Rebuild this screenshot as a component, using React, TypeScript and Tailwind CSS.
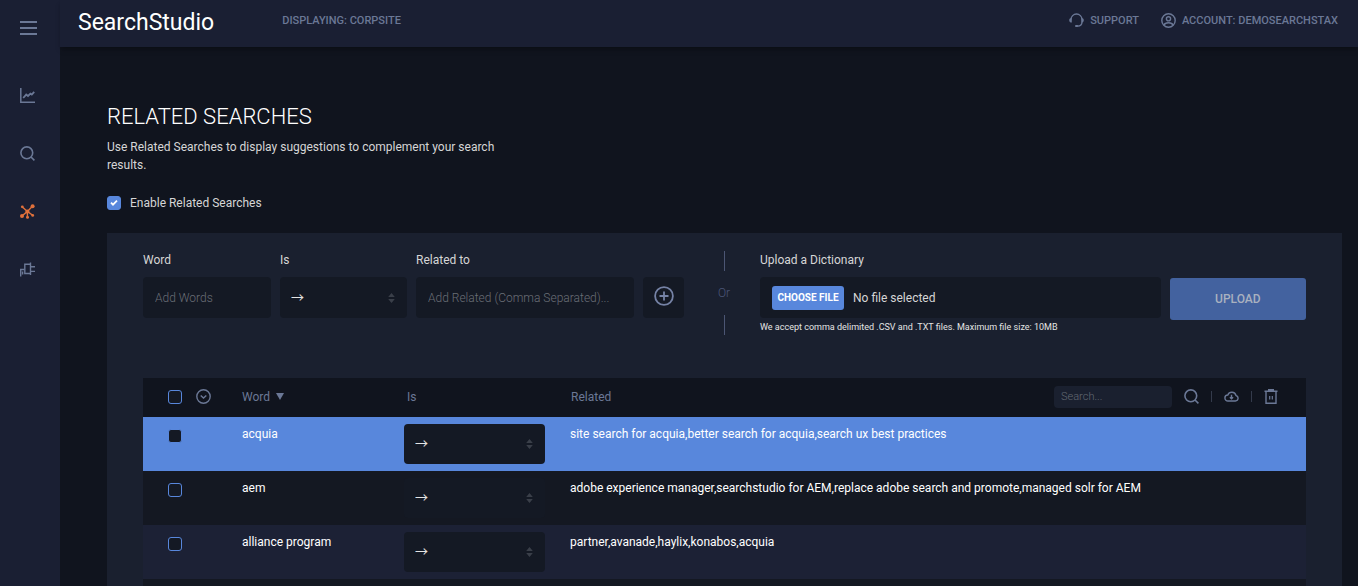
import { useState } from 'react'
import type { ReactNode } from 'react'

const rows = [
  { id: 1, word: 'acquia', related: 'site search for acquia,better search for acquia,search ux best practices', selected: true },
  { id: 2, word: 'aem', related: 'adobe experience manager,searchstudio for AEM,replace adobe search and promote,managed solr for AEM' },
  { id: 3, word: 'alliance program', related: 'partner,avanade,haylix,konabos,acquia' },
]

const iconProps = { fill: 'none', stroke: 'currentColor', 'aria-hidden': true }

function SearchIcon() {
  return (
    <svg width="15" height="15" viewBox="0 0 15 15" strokeWidth="1.6" {...iconProps}>
      <circle cx="6.8" cy="6.8" r="5.9" />
      <path d="M11 11l3.4 3.4" />
    </svg>
  )
}

function ChartIcon() {
  return (
    <svg width="15" height="15" viewBox="0 0 15 15" strokeWidth="1.5" {...iconProps}>
      <path d="M.8 0v14.2H15" />
      <path d="M3.2 10l3-3.4 1.8 1.4 2.4-2.4 1.4 1L14.2 3.8" strokeWidth="1.8" />
    </svg>
  )
}

function HubIcon() {
  return (
    <svg width="15" height="15" viewBox="0 0 15 15" strokeWidth="1.4" {...iconProps}>
      <path d="M7.4 7.4L2.4 2.9M7.4 7.4l4.8-4.8M7.4 7.4L2 12M7.4 7.4l5.2 3.8M7.4 7.4v5.4" />
      <g fill="currentColor" stroke="none">
        <circle cx="7.4" cy="7.4" r="2" />
        <circle cx="2.3" cy="2.8" r="1.4" />
        <circle cx="12.6" cy="2.3" r="2" />
        <circle cx="2" cy="12.1" r="2" />
        <circle cx="12.7" cy="11.4" r="1.4" />
        <circle cx="7.5" cy="13.2" r="1.5" />
      </g>
    </svg>
  )
}

function PlugIcon() {
  return (
    <svg width="15" height="15" viewBox="0 0 15 15" strokeWidth="1.4" {...iconProps}>
      <path d="M.7 14.5V7.5h3.8M2.600 9.500v3" />
      <path d="M10.500.5v12.500M10.500 2.200H4.800v9.300h5.700M10.500 4.700H15M10.500 9.400H15" />
    </svg>
  )
}

function HeadsetIcon() {
  return (
    <svg width="15" height="15" viewBox="0 0 15 15" strokeWidth="1.3" {...iconProps}>
      <path d="M2 6.5a5.5 5.5 0 0 1 11 0M13 9c0 2.4-1.7 4-4.4 4.2" />
      <g fill="currentColor" stroke="none">
        <path d="M2.8 5v4.6C1.2 9.6.2 8.7.2 7.3S1.2 5 2.8 5zM12.2 5v4.6c1.6 0 2.6-.9 2.6-2.3S13.8 5 12.2 5z" />
        <rect x="6" y="12.1" width="3.3" height="2" rx="1" />
      </g>
    </svg>
  )
}

function AccountIcon() {
  return (
    <svg width="15" height="15" viewBox="0 0 15 15" strokeWidth="1.4" {...iconProps}>
      <circle cx="7.5" cy="7.5" r="6.7" />
      <circle cx="7.5" cy="5.8" r="2.1" />
      <path d="M3 12.2c.6-1.8 2.2-2.4 4.5-2.4s3.9.6 4.5 2.4" />
    </svg>
  )
}

function SelectArrows() {
  return (
    <svg className="pointer-events-none absolute right-3 top-1/2 -translate-y-1/2 text-[#3a3f49]" width="7" height="10" viewBox="0 0 7 10" fill="currentColor" aria-hidden>
      <path d="M3.5 0L6.8 4H.2zM3.5 10L.2 6h6.6z" />
    </svg>
  )
}

function RelationSelect({ id, label, height }: { id: string; label?: string; height: string }) {
  return (
    <div className="relative">
      <select
        id={id}
        aria-label={label}
        className={`block w-full appearance-none rounded bg-[#141924] px-[11px] pb-0.5 font-['Noto_Sans_CJK_JP',sans-serif] text-[13px] text-[#e4e4e4] outline-none ${height}`}
      >
        <option>→</option>
        <option>↔</option>
      </select>
      <SelectArrows />
    </div>
  )
}

function Field({ label, htmlFor, children }: { label: string; htmlFor: string; children: ReactNode }) {
  return (
    <div className="min-w-0">
      <label htmlFor={htmlFor} className="mb-2 block">{label}</label>
      {children}
    </div>
  )
}

function Sidebar() {
  const items = [
    { name: 'Analytics', icon: <ChartIcon />, active: false },
    { name: 'Search', icon: <SearchIcon />, active: false },
    { name: 'Related searches', icon: <HubIcon />, active: true },
    { name: 'Integrations', icon: <PlugIcon />, active: false },
  ]
  return (
    <aside className="w-15 shrink-0 bg-[#1a1f33] pl-5 text-[#6b7896]">
      <button aria-label="Menu" className="flex h-14 items-center">
        <svg width="17" height="14" viewBox="0 0 17 14" strokeWidth="2" {...iconProps}>
          <path d="M0 1h17M0 7h17M0 13h17" />
        </svg>
      </button>
      <nav className="mt-2.5">
        {items.map((item) => (
          <a key={item.name} href="#" aria-label={item.name} className={`flex h-[58px] items-center ${item.active ? 'text-[#e0713c]' : ''}`}>
            {item.icon}
          </a>
        ))}
      </nav>
    </aside>
  )
}

function Header() {
  return (
    <header className="flex h-[47px] items-center bg-[#1a1f33] pr-5 pl-[18px] text-[11px] font-medium text-[#6b7896] shadow-md shadow-black/20">
      <span className="pb-0.5 text-[23px] leading-7 font-normal text-white">SearchStudio</span>
      <span className="ml-[68px] pb-1.5">DISPLAYING: CORPSITE</span>
      <div className="ml-auto flex items-center gap-[22px] pb-1.5">
        <a href="#" className="flex items-center gap-1.5"><HeadsetIcon />SUPPORT</a>
        <a href="#" className="flex items-center gap-1.5"><AccountIcon />ACCOUNT: DEMOSEARCHSTAX</a>
      </div>
    </header>
  )
}

function AddForm() {
  const [fileName, setFileName] = useState('No file selected')
  return (
    <form className="grid grid-cols-[541fr_76px_546fr] items-start" onSubmit={(e) => e.preventDefault()}>
      <div className="grid grid-cols-[128fr_127fr_218fr_41px] items-end gap-[9px]">
        <Field label="Word" htmlFor="word">
          <input id="word" placeholder="Add Words" className="block h-[41px] w-full rounded bg-[#141924] px-3 font-light outline-none placeholder:text-[#6a6e76]" />
        </Field>
        <Field label="Is" htmlFor="relation">
          <RelationSelect id="relation" height="h-[41px]" />
        </Field>
        <Field label="Related to" htmlFor="related">
          <input id="related" placeholder="Add Related (Comma Separated)..." className="block h-[41px] w-full rounded bg-[#141924] px-3 font-light outline-none placeholder:text-[#6a6e76]" />
        </Field>
        <button aria-label="Add" className="flex h-[41px] items-center justify-center rounded bg-[#141924] pb-1 text-[#7582a5]">
          <svg width="20" height="20" viewBox="0 0 20 20" strokeWidth="1.8" {...iconProps}>
            <circle cx="10" cy="10" r="8.9" />
            <path d="M10 5.5v9M5.500 10h9" />
          </svg>
        </button>
      </div>

      <div className="flex h-[84px] flex-col items-center justify-between pl-1 font-light text-[#4a5577]">
        <span className="h-5 w-px bg-[#4c5674]" />
        <span>Or</span>
        <span className="h-5 w-px bg-[#4c5674]" />
      </div>

      <div className="grid grid-cols-[400fr_136fr] gap-x-[9px]">
        <div>
          <span className="mb-2 block">Upload a Dictionary</span>
          <div className="flex h-[41px] items-center gap-[9px] rounded bg-[#141924] px-3">
            <input
              id="dictionary"
              type="file"
              accept=".csv,.txt"
              className="sr-only"
              onChange={(e) => setFileName(e.target.files?.[0]?.name ?? 'No file selected')}
            />
            <label htmlFor="dictionary" className="flex h-6 w-[72px] items-center justify-center rounded-[3px] bg-[#5887dc] text-[10px] font-bold whitespace-nowrap text-white">
              CHOOSE FILE
            </label>
            <span>{fileName}</span>
          </div>
          <p className="text-[9px] leading-[18px] text-[#e4e4e4]">We accept comma delimited .CSV and .TXT files. Maximum file size: 10MB</p>
        </div>
        <button className="mt-[27px] h-[42px] rounded-[3px] bg-[#43629f] font-medium text-[#a9b1bf]">UPLOAD</button>
      </div>
    </form>
  )
}

const boxClass = 'block size-[14px] appearance-none rounded-[3px] border border-[#5887dc] bg-[#141924]'

function RelatedTable() {
  return (
    <table className="mt-[42px] w-full table-fixed border-collapse text-left">
      <colgroup>
        <col className="w-[99px]" />
        <col className="w-[162px]" />
        <col className="w-[166px]" />
        <col />
      </colgroup>
      <thead className="bg-[#10141e] text-[#6b7896]">
        <tr className="h-[39px]">
          <th className="p-0 pb-0.5 pl-[25px]">
            <div className="flex items-center gap-3.5">
              <input type="checkbox" aria-label="Select all" className={boxClass} />
              <button aria-label="Bulk actions" className="block">
                <svg width="15" height="15" viewBox="0 0 15 15" strokeWidth="1.4" {...iconProps}>
                  <circle cx="7.5" cy="7.5" r="6.7" />
                  <path d="M4.7 6.4l2.8 2.7 2.8-2.7" />
                </svg>
              </button>
            </div>
          </th>
          <th className="p-0 pb-0.5 font-normal">
            <button className="flex items-center gap-1.5">
              Word
              <svg width="8" height="7" viewBox="0 0 8 7" fill="currentColor" aria-hidden><path d="M0 0h8L4 7z" /></svg>
            </button>
          </th>
          <th className="p-0 pb-0.5 pl-[3px] font-normal">Is</th>
          <th className="p-0 pb-0.5 pl-px font-normal">
            <div className="flex items-center justify-between pr-7">
              Related
              <div className="flex items-center gap-3">
                <input aria-label="Search related words" placeholder="Search..." className="block h-[22px] w-[118px] rounded-sm bg-[#1a202f] px-[7px] text-[11px] font-light outline-none placeholder:text-[#636973]" />
                <button aria-label="Search"><SearchIcon /></button>
                <span className="h-[11px] w-px bg-[#343b4c]" />
                <button aria-label="Download">
                  <svg width="15" height="15" viewBox="0 0 15 15" strokeWidth="1.4" {...iconProps}>
                    <path d="M4 12h7.4a2.8 2.8 0 0 0 .6-5.5A4.3 4.3 0 0 0 3.8 6 3 3 0 0 0 4 12z" />
                    <path d="M7.5 5.8v4M5.900 8.2l1.6 1.6 1.6-1.6" />
                  </svg>
                </button>
                <span className="h-[11px] w-px bg-[#343b4c]" />
                <button aria-label="Delete">
                  <svg width="14" height="15" viewBox="0 0 14 15" strokeWidth="1.4" {...iconProps}>
                    <path d="M.5 2.3h13M4.7 2.2V.7h4.6v1.5M2 2.5v11.8h10V2.5" />
                    <path d="M5.7 7v3.5M8.3 7v3.5" strokeWidth="1.2" />
                  </svg>
                </button>
              </div>
            </div>
          </th>
        </tr>
      </thead>
      <tbody className="text-white">
        {rows.map((row) => (
          <tr key={row.id} className={`h-[54px] align-top ${row.selected ? 'bg-[#5887dc]' : 'even:bg-[#141822] odd:bg-[#1c2135]'}`}>
            <td className="p-0 pt-3 pl-[25px]">
              <input type="checkbox" aria-label={`Select ${row.word}`} className={boxClass} />
            </td>
            <td className="p-0 pt-2">{row.word}</td>
            <td className="p-0 pt-[7px] pr-[25px]">
              <RelationSelect id={`relation-${row.id}`} label={`Relation of ${row.word}`} height="h-10" />
            </td>
            <td className="p-0 pt-2">{row.related}</td>
          </tr>
        ))}
        <tr className="h-[7px] bg-[#141822]"><td colSpan={4} className="p-0" /></tr>
      </tbody>
    </table>
  )
}

export default function App() {
  return (
    <div className="flex min-h-screen bg-[#10141e] font-[Roboto,'Liberation_Sans',sans-serif] text-[12px] leading-[18px] text-[#d6d6d6]">
      <Sidebar />
      <div className="flex min-w-0 flex-1 flex-col">
        <Header />
        <main className="flex flex-1 flex-col pt-14 pr-4 pl-[47px]">
          <h1 className="text-[22px] leading-7 font-light text-white">RELATED SEARCHES</h1>
          <p className="mt-[7px] max-w-[400px]">Use Related Searches to display suggestions to complement your search results.</p>
          <div className="mt-5 flex items-center gap-[9px]">
            <div className="relative">
              <input id="enable" type="checkbox" defaultChecked className="peer block size-[14px] appearance-none rounded-[3px] border border-[#5887dc] checked:bg-[#5887dc]" />
              <svg className="pointer-events-none absolute inset-0 hidden text-white peer-checked:block" width="14" height="14" viewBox="0 0 14 14" strokeWidth="1.8" {...iconProps}>
                <path d="M4 6.7l2 2 4-4" />
              </svg>
            </div>
            <label htmlFor="enable">Enable Related Searches</label>
          </div>
          <section className="mt-[21px] flex-1 bg-[#1a202f] px-9 pt-[18px]">
            <AddForm />
            <RelatedTable />
          </section>
        </main>
      </div>
    </div>
  )
}
